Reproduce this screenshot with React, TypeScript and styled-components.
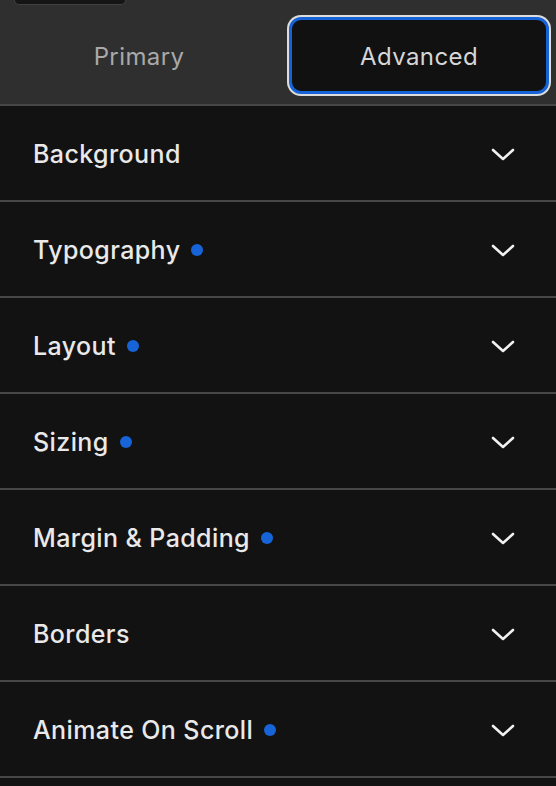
import React from "react";
import styled, { createGlobalStyle } from "styled-components";

const Global = createGlobalStyle`
  html, body { margin: 0; padding: 0; background: #121212; }
  body { font-family: Inter, "Noto Sans", sans-serif; -webkit-font-smoothing: antialiased; }
`;

const Page = styled.div`
  width: 556px;
  min-height: 786px;
  background: #121212;
`;

const Header = styled.div`
  background: #2f2f2f;
  height: 104px;
  border-bottom: 2px solid #474747;
  display: flex;
  flex-direction: column;
`;

const TopStub = styled.div`
  width: 112px;
  height: 5px;
  margin-left: 14px;
  background: #151515;
  border: 1px solid #404040;
  border-top: none;
  border-radius: 0 0 8px 8px;
  box-sizing: border-box;
`;

const Tabs = styled.div`
  display: grid;
  grid-template-columns: 1fr 1fr;
  gap: 20px;
  padding: 12px 7px 0 9px;
`;

const Tab = styled.button<{ $active?: boolean }>`
  height: 77px;
  box-sizing: border-box;
  font-family: Inter, sans-serif;
  font-size: 24px;
  font-weight: 400;
  letter-spacing: 0.4px;
  border-radius: 12px;
  cursor: pointer;
  color: ${(p) => (p.$active ? "#d6d6d6" : "#a9a9a9")};
  background: ${(p) => (p.$active ? "#111111" : "transparent")};
  border: ${(p) => (p.$active ? "3px solid #1563d6" : "3px solid transparent")};
  box-shadow: ${(p) => (p.$active ? "0 0 0 2px #dcdcdc" : "none")};
  padding: 2px 0 0;
`;

const Row = styled.div`
  height: 92px;
  padding: 2px 41px 0 33px;
  border-bottom: 2px solid #474747;
  display: flex;
  align-items: center;
`;

const Label = styled.span`
  font-size: 25px;
  font-weight: 500;
  color: #e9e9e9;
  letter-spacing: 0.4px;
`;

const Dot = styled.span`
  width: 12px;
  height: 12px;
  border-radius: 50%;
  background: #1764d8;
  margin-left: 11px;
  margin-top: -1px;
`;

const Chevron = styled.svg`
  margin-left: auto;
  width: 24px;
  height: 13px;
  margin-top: 1px;
`;

const rows: { label: string; dot: boolean }[] = [
  { label: "Background", dot: false },
  { label: "Typography", dot: true },
  { label: "Layout", dot: true },
  { label: "Sizing", dot: true },
  { label: "Margin & Padding", dot: true },
  { label: "Borders", dot: false },
  { label: "Animate On Scroll", dot: true },
];

export default function App() {
  return (
    <Page>
      <Global />
      <Header>
        <TopStub />
        <Tabs>
          <Tab>Primary</Tab>
          <Tab $active>Advanced</Tab>
        </Tabs>
      </Header>
      {rows.map((r) => (
        <Row key={r.label}>
          <Label>{r.label}</Label>
          {r.dot && <Dot />}
          <Chevron viewBox="0 0 24 13" fill="none">
            <path d="M2 2 L12 11 L22 2" stroke="#f0f0f0" strokeWidth="2.6" strokeLinecap="round" strokeLinejoin="round" />
          </Chevron>
        </Row>
      ))}
    </Page>
  );
}
